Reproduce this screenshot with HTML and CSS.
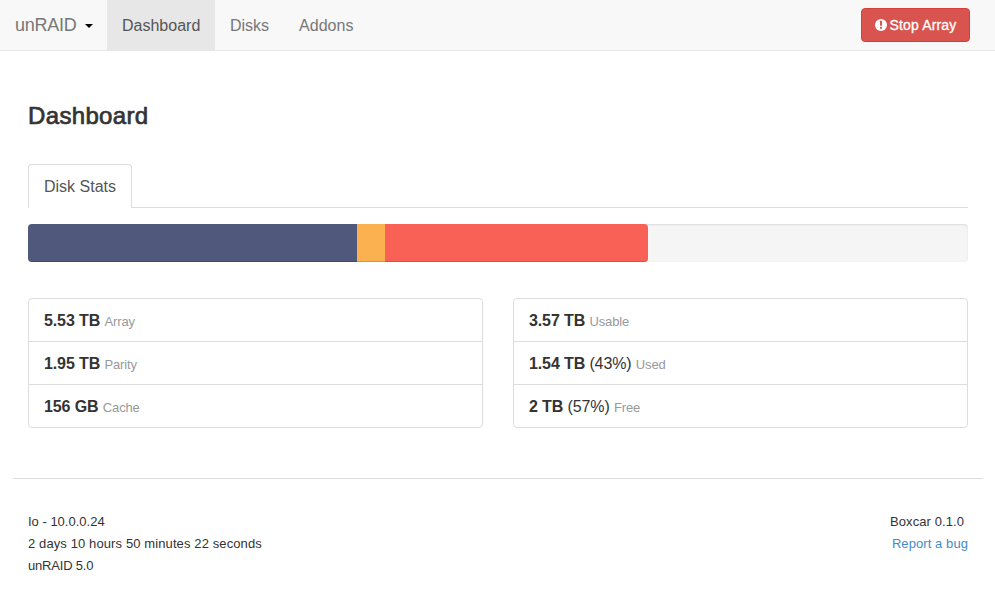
FILE: index.html
```html
<!DOCTYPE html>
<html lang="en">
<head>
<meta charset="utf-8">
<title>Dashboard</title>
<link rel="stylesheet" href="styles.css">
</head>
<body>
<nav class="navbar">
  <a class="brand">unRAID<span class="caret"></span></a>
  <a class="nav-item active">Dashboard</a>
  <a class="nav-item">Disks</a>
  <a class="nav-item">Addons</a>
  <button class="btn-danger"><svg class="icon" viewBox="0 0 12 12"><circle cx="6" cy="6" r="6" fill="#fff"/><path d="M4.8 1.8h2.4l-.3 5H5.1zM5 7.8h2v1.9H5z" fill="#d9534f"/></svg><span>Stop Array</span></button>
</nav>
<main class="container">
  <h1>Dashboard</h1>
  <div class="tabs"><a class="tab">Disk Stats</a></div>
  <div class="progress">
    <div class="bar array" style="width:329px"></div>
    <div class="bar cache" style="width:28px"></div>
    <div class="bar used" style="width:263px"></div>
  </div>
  <div class="stats">
    <ul class="list">
      <li><b>5.53 TB</b> <small>Array</small></li>
      <li><b>1.95 TB</b> <small>Parity</small></li>
      <li><b>156 GB</b> <small>Cache</small></li>
    </ul>
    <ul class="list">
      <li><b>3.57 TB</b> <small>Usable</small></li>
      <li><b>1.54 TB</b> (43%) <small>Used</small></li>
      <li><b>2 TB</b> (57%) <small>Free</small></li>
    </ul>
  </div>
</main>
<footer class="footer">
  <div>
    <p>Io - 10.0.0.24</p>
    <p class="uptime">2 days 10 hours 50 minutes 22 seconds</p>
    <p class="system">unRAID 5.0</p>
  </div>
  <div class="about">
    <p class="version">Boxcar 0.1.0</p>
    <p><a class="link">Report a bug</a></p>
  </div>
</footer>
</body>
</html>
```
FILE: styles.css
```css
* { box-sizing: border-box; }
body {
  margin: 0;
  font: 16px/22px "Liberation Sans", Arial, sans-serif;
  color: #333;
  background: #fff;
}
.navbar {
  display: flex;
  height: 51px;
  padding-right: 25px;
  background: #f8f8f8;
  border-bottom: 1px solid #e7e7e7;
}
.brand {
  display: flex;
  align-items: center;
  width: 107px;
  padding-left: 15px;
  font-size: 18px;
  letter-spacing: -0.25px;
  color: #777;
}
.caret {
  margin: 2px 0 0 8px;
  border: 4px solid transparent;
  border-top-color: #000;
  border-bottom: 0;
}
.nav-item {
  padding: 15px 15px 13px;
  color: #777;
}
.nav-item.active {
  width: 108px;
  color: #555;
  background: #e7e7e7;
}
.btn-danger {
  display: flex;
  align-items: center;
  justify-content: center;
  gap: 3px;
  width: 109px;
  height: 34px;
  margin: 8px 0 0 auto;
  padding: 0;
  font: 14px/20px "Liberation Sans", Arial, sans-serif;
  letter-spacing: 0.15px;
  -webkit-text-stroke: 0.3px #fff;
  color: #fff;
  background: #d9534f;
  border: 1px solid #d43f3a;
  border-radius: 4px;
}
.icon { width: 12px; height: 12px; }
.container { margin: 0 27px 0 28px; }
h1 {
  margin: 0;
  padding-top: 52px;
  font-size: 24px;
  line-height: 26px;
  font-weight: 400;
  letter-spacing: 0.35px;
  -webkit-text-stroke: 0.7px #333;
}
.tabs {
  display: flex;
  height: 44px;
  margin-top: 35px;
  border-bottom: 1px solid #ddd;
}
.tab {
  height: 44px;
  width: 104px;
  padding: 11px 0 0 15px;
  color: #555;
  background: #fff;
  border: 1px solid #ddd;
  border-bottom: 0;
  border-radius: 4px 4px 0 0;
}
.progress {
  display: flex;
  height: 38px;
  margin-top: 16px;
  overflow: hidden;
  background: #f5f5f5;
  border-radius: 4px;
  box-shadow: inset 0 1px 2px rgba(0, 0, 0, 0.1);
}
.bar { box-shadow: inset 0 -1px 0 rgba(0, 0, 0, 0.15); }
.array { background: #50597b; }
.cache { background: #fbb150; }
.used { background: #f96156; border-radius: 0 4px 4px 0; }
.stats {
  display: grid;
  grid-template-columns: 1fr 1fr;
  gap: 30px;
  margin-top: 36px;
}
.list {
  margin: 0;
  padding: 0;
  list-style: none;
  border: 1px solid #ddd;
  border-radius: 4px;
}
.list li {
  height: 43px;
  padding: 11px 15px 0;
  letter-spacing: -0.12px;
}
.list li + li { border-top: 1px solid #ddd; }
.list li:first-child { height: 42px; }
small { font-size: 13px; color: #999; }
.footer {
  display: flex;
  justify-content: space-between;
  margin: 50px 12px 0 13px;
  padding: 32px 15px 0;
  border-top: 1px solid #ddd;
  font-size: 13px;
}
.footer p { margin: 0; }
.footer .uptime { letter-spacing: 0.11px; }
.footer .system { letter-spacing: -0.2px; }
.about { text-align: right; letter-spacing: 0.08px; }
.footer .version { padding-right: 4px; }
.link { color: #428bca; }
```
